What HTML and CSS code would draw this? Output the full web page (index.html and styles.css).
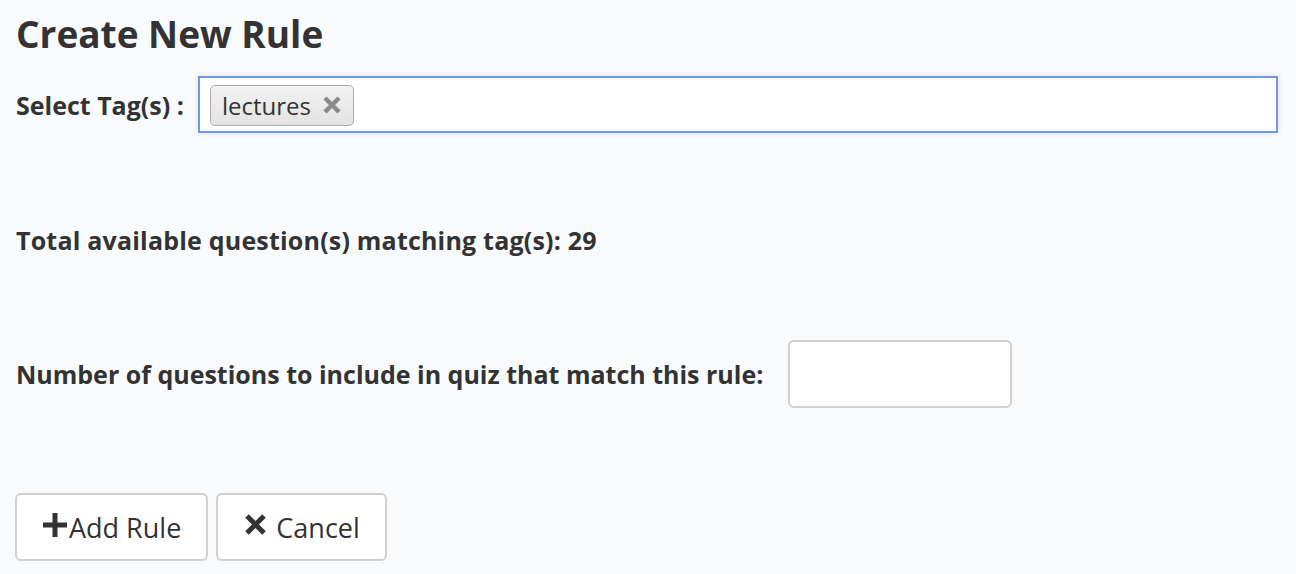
FILE: index.html
```html
<!DOCTYPE html>
<html>
<head>
<meta charset="utf-8">
<link rel="stylesheet" href="styles.css">
</head>
<body>
<div class="page">
  <h1 class="title">Create New Rule</h1>
  <div class="tag-row">
    <label class="label tag-label">Select Tag(s) :</label>
    <div class="tag-input">
      <span class="chip">lectures
        <svg class="chip-x" viewBox="0 0 20 20" width="20" height="20"><path d="M3 3 L17 17 M17 3 L3 17" stroke="#8a8a8a" stroke-width="4.4" stroke-linecap="butt"/></svg>
      </span>
    </div>
  </div>
  <div class="total">Total available question(s) matching tag(s): 29</div>
  <div class="num-row">
    <label class="label">Number of questions to include in quiz that match this rule:</label>
    <input class="num-input" type="text">
  </div>
  <div class="actions">
    <button class="btn btn-add"><svg class="ico-plus" viewBox="0 0 24 24" width="24" height="24"><path d="M12 0 V24 M0 12 H24" stroke="#333" stroke-width="5"/></svg>Add Rule</button>
    <button class="btn btn-cancel"><svg class="ico-x" viewBox="0 0 21 21" width="21" height="21"><path d="M2 2 L19 19 M19 2 L2 19" stroke="#333" stroke-width="5"/></svg>Cancel</button>
  </div>
</div>
</body>
</html>
```

FILE: styles.css
```css
html, body {
  margin: 0;
  padding: 0;
  background: #f9fafc;
}
body {
  font-family: "Open Sans", "Liberation Sans", sans-serif;
  color: #333;
}
.page {
  padding: 0 16px;
  display: flex;
  flex-direction: column;
}
.title {
  margin: 12px 0 0 0;
  font-size: 37px;
  line-height: 44px;
  font-weight: 700;
}
.tag-row {
  margin-top: 20px;
  display: flex;
  align-items: center;
}
.label {
  font-size: 25px;
  line-height: 30px;
  font-weight: 700;
  letter-spacing: 0;
}
.tag-label {
  width: 182px;
}
.tag-input {
  flex: 1;
  margin-right: 2px;
  height: 53px;
  background: #fff;
  border: 2px solid #6d97ee;
  box-shadow: 0 0 6px rgba(0,0,0,0.12);
  display: flex;
  align-items: center;
  padding-left: 10px;
}
.chip {
  display: inline-flex;
  align-items: center;
  box-sizing: border-box;
  height: 41px;
  padding: 0 11px 0 11px;
  border: 1px solid #aaa;
  border-radius: 5px;
  background: linear-gradient(#f2f2f2, #e3e3e3);
  font-size: 24px;
  color: #333;
  margin-top: 1px;
}
.chip-x {
  margin-left: 11px;
}
.total {
  margin-top: 92px;
  font-size: 25px;
  font-weight: 700;
  line-height: 30px;
  letter-spacing: 0.2px;
}
.num-row {
  margin-top: 85px;
  display: flex;
  align-items: center;
}
.num-input {
  margin-left: 25px;
  width: 224px;
  height: 68px;
  box-sizing: border-box;
  border: 2px solid #d0d0d0;
  border-radius: 6px;
  background: #fff;
}
.actions {
  margin-top: 85px;
  margin-left: -1px;
  display: flex;
  gap: 8px;
}
.btn {
  height: 68px;
  box-sizing: border-box;
  border: 2px solid #d0d0d0;
  border-radius: 6px;
  background: #fff;
  font-family: "Open Sans", "Liberation Sans", sans-serif;
  font-size: 27px;
  color: #333;
  display: flex;
  align-items: center;
}
.btn-add {
  padding: 0 25px 0 26px;
}
.btn-cancel {
  padding: 0 25px 0 27px;
}
.ico-plus {
  margin-right: 2px;
  margin-top: -4px;
}
.ico-x {
  margin-right: 10px;
  margin-top: -6px;
}
```
